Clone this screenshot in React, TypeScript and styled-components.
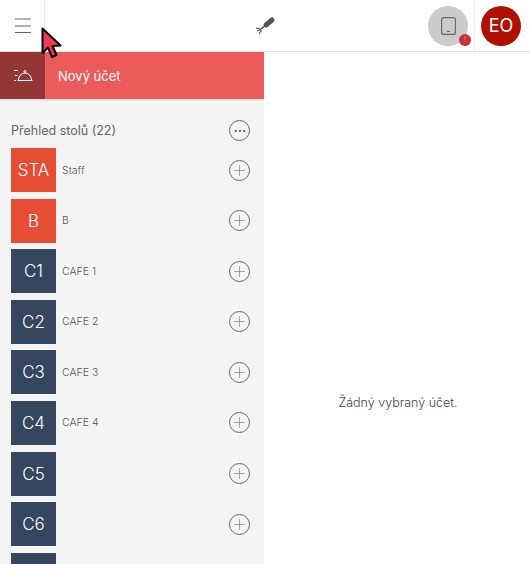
import styled, { createGlobalStyle } from "styled-components"
import { Plus, Ellipsis } from "lucide-react"

const GlobalStyle = createGlobalStyle`
  html, body {
    margin: 0;
    padding: 0;
    background: #fff;
    overflow: hidden;
  }
  * {
    box-sizing: border-box;
  }
`

const Page = styled.div`
  position: relative;
  width: 530px;
  height: 564px;
  overflow: hidden;
  display: flex;
  flex-direction: column;
  font-family: Inter, "Liberation Sans", sans-serif;
  font-weight: 300;
  color: #555;
`
const Header = styled.header`
  height: 52px;
  flex: none;
  display: flex;
  align-items: center;
  background: #fff;
  border-bottom: 1px solid #e2e2e2;
`
const MenuButton = styled.div`
  width: 45px;
  height: 51px;
  flex: none;
  display: flex;
  align-items: center;
  justify-content: center;
  padding-left: 1px;
  border-right: 1px solid #ececec;
`
const Center = styled.div`
  flex: 1;
  display: flex;
  justify-content: center;
  padding-left: 57px;
  padding-bottom: 1px;
`
const DeviceButton = styled.div`
  position: relative;
  width: 40px;
  height: 40px;
  margin-right: 6px;
  border-radius: 50%;
  background: #cbcbcb;
  display: flex;
  align-items: center;
  justify-content: center;
`
const Badge = styled.span`
  position: absolute;
  right: -3px;
  bottom: 0;
  width: 12px;
  height: 12px;
  border-radius: 50%;
  background: #c8313f;
  display: flex;
  align-items: center;
  justify-content: center;
  color: #f4b6b6;
  font-size: 7px;
  line-height: 1;
`
const Divider = styled.div`
  width: 1px;
  height: 51px;
  background: #ececec;
`
const Avatar = styled.div`
  width: 40px;
  height: 40px;
  margin: 0 9px 0 6px;
  border-radius: 50%;
  background: #b00f04;
  color: #fff;
  display: flex;
  align-items: center;
  justify-content: center;
  font-size: 18px;
  font-weight: 400;
`
const Body = styled.div`
  flex: 1;
  display: flex;
  min-height: 0;
`
const Sidebar = styled.aside`
  width: 264px;
  flex: none;
  background: #f4f4f4;
  overflow: hidden;
`
const NewBill = styled.div`
  height: 47px;
  display: flex;
  align-items: center;
  background: #ec5b5b;
  color: #fff;
  font-size: 13px;
  font-weight: 400;
  box-shadow: 0 1px 2px rgba(0, 0, 0, 0.15);
`
const NewBillIcon = styled.div`
  width: 45px;
  height: 100%;
  margin-right: 13px;
  background: #953636;
  display: flex;
  align-items: center;
  justify-content: center;
`
const SectionHead = styled.div`
  height: 49px;
  padding: 14px 14px 0 11px;
  display: flex;
  align-items: center;
  justify-content: space-between;
  font-size: 12.5px;
  font-weight: 400;
  color: #666;
`
const CircleIcon = styled.div`
  width: 21px;
  height: 21px;
  border: 1px solid #666;
  border-radius: 50%;
  display: flex;
  align-items: center;
  justify-content: center;
  color: #666;
  flex: none;
`
const TableRow = styled.div`
  height: 44px;
  margin-bottom: 6.6px;
  padding: 0 14px 0 11px;
  display: flex;
  align-items: center;
`
const Tile = styled.div<{ $color: string }>`
  width: 45px;
  height: 44px;
  flex: none;
  background: ${(p) => p.$color};
  color: #fff;
  font-size: 17px;
  display: flex;
  align-items: center;
  justify-content: center;
`
const TableName = styled.span`
  flex: 1;
  margin-left: 6px;
  font-size: 10.5px;
  color: #555;
`
const Main = styled.main`
  flex: 1;
  display: flex;
  justify-content: center;
  padding: 343px 0 0 2px;
  font-size: 12.5px;
  color: #444;
`
const Cursor = styled.svg`
  position: absolute;
  left: 41px;
  top: 27px;
`

const RED = "#e64d35"
const BLUE = "#35475f"

const tables = [
  { id: 1, code: "STA", name: "Staff", color: RED },
  { id: 2, code: "B", name: "B", color: RED },
  { id: 3, code: "C1", name: "CAFE 1", color: BLUE },
  { id: 4, code: "C2", name: "CAFE 2", color: BLUE },
  { id: 5, code: "C3", name: "CAFE 3", color: BLUE },
  { id: 6, code: "C4", name: "CAFE 4", color: BLUE },
  { id: 7, code: "C5", name: "", color: BLUE },
  { id: 8, code: "C6", name: "", color: BLUE },
  // cut off by the window, its label is not visible
  { id: 9, code: "", name: "", color: BLUE },
]

function BurgerIcon() {
  return (
    <svg width="16" height="15" viewBox="0 0 16 15" stroke="#666" strokeWidth="1.1">
      <path d="M0 1 H16 M0 8 H16 M0 14.5 H16" />
    </svg>
  )
}

function ForkIcon() {
  return (
    <svg width="22" height="20" viewBox="0 0 22 20" fill="none" stroke="#555">
      <path d="M12 10 L18 5" strokeWidth="5" strokeLinecap="round" />
      <path d="M12 10 L7 14" strokeWidth="1.6" />
      <path d="M2 13 L7 14 M3 16 L7 14.5 M5 19 L7.5 15" strokeWidth="1.2" />
    </svg>
  )
}

function ClocheIcon() {
  return (
    <svg width="20" height="14" viewBox="0 0 20 14" fill="none" stroke="#fff" strokeWidth="1">
      <path d="M5.5 11 A6.5 7 0 0 1 18.5 11" />
      <path d="M4.5 11.5 H19.5" />
      <circle cx="12" cy="2.5" r="1" />
      <path d="M1 1.5 H5 M2 6.5 H4.5 M1 11.5 H3" />
    </svg>
  )
}

function TabletIcon() {
  return (
    <svg width="15" height="18" viewBox="0 0 15 18" fill="none" stroke="#666" strokeWidth="1.1">
      <rect x="0.6" y="0.6" width="13.8" height="16.8" rx="2" />
      <path d="M6 14.5 H9" />
    </svg>
  )
}

export default function App() {
  return (
    <Page>
      <GlobalStyle />
      <Header>
        <MenuButton>
          <BurgerIcon />
        </MenuButton>
        <Center>
          <ForkIcon />
        </Center>
        <DeviceButton>
          <TabletIcon />
          <Badge>!</Badge>
        </DeviceButton>
        <Divider />
        <Avatar>EO</Avatar>
      </Header>
      <Body>
        <Sidebar>
          <NewBill>
            <NewBillIcon>
              <ClocheIcon />
            </NewBillIcon>
            Nový účet
          </NewBill>
          <SectionHead>
            Přehled stolů (22)
            <CircleIcon>
              <Ellipsis size={14} strokeWidth={2} />
            </CircleIcon>
          </SectionHead>
          {tables.map((t) => (
            <TableRow key={t.id}>
              <Tile $color={t.color}>{t.code}</Tile>
              <TableName>{t.name}</TableName>
              <CircleIcon>
                <Plus size={17} strokeWidth={0.8} />
              </CircleIcon>
            </TableRow>
          ))}
        </Sidebar>
        <Main>Žádný vybraný účet.</Main>
      </Body>
      <Cursor width="24" height="36" viewBox="0 0 24 36">
        <path
          d="M1.5 1.5 L1.5 26 L7 20.5 L11 30 L15.5 28 L11.5 19 L19.5 18.5 Z"
          fill="#f23a55"
          stroke="#000"
          strokeWidth="2"
          strokeLinejoin="round"
        />
      </Cursor>
    </Page>
  )
}
